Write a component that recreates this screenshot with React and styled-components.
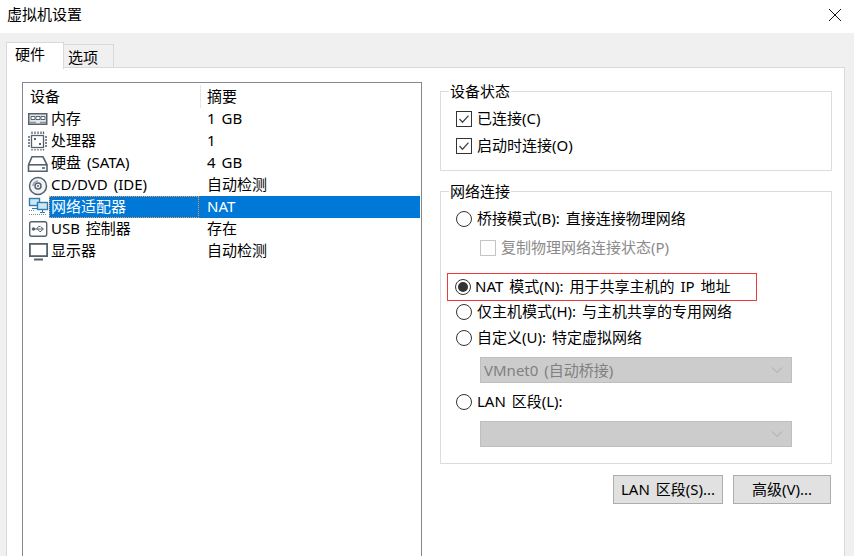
import React from 'react';
import styled, { createGlobalStyle } from 'styled-components';

const GlobalStyle = createGlobalStyle`
  html, body {
    margin: 0;
    padding: 0;
    background: #fff;
  }
  * {
    box-sizing: border-box;
  }
`;

const FONT = `"Noto Sans", "Noto Sans CJK SC", "Liberation Sans", sans-serif`;

const Page = styled.div`
  width: 854px;
  height: 556px;
  overflow: hidden;
  display: flex;
  flex-direction: column;
  background: #f0f0f0;
  color: #000;
  font-family: ${FONT};
  font-size: 15px;
  line-height: 20px;
  word-spacing: 2px;
`;

const TitleBar = styled.div`
  height: 33px;
  flex: none;
  padding: 4px 12px 0 7px;
  display: flex;
  justify-content: space-between;
  background: #fff;
`;

const CloseIcon = styled.svg`
  width: 14px;
  height: 14px;
  margin-top: 4px;
`;

const Body = styled.div`
  flex: 1;
  min-height: 0;
  padding: 9px 9px 0 6px;
  display: flex;
  flex-direction: column;
`;

const Tabs = styled.div`
  height: 26px;
  flex: none;
  display: flex;
  align-items: flex-start;
  position: relative;
  z-index: 1;
`;

const Tab = styled.div`
  height: ${(p) => (p.$active ? '27px' : '24px')};
  margin-top: ${(p) => (p.$active ? '0' : '2px')};
  width: ${(p) => (p.$active ? '58px' : '50px')};
  padding: ${(p) => (p.$active ? '1px 0 0 8px' : '2px 0 0 4px')};
  background: ${(p) => (p.$active ? '#fff' : '#f0f0f0')};
  border: 1px solid #d9d9d9;
  border-left-width: ${(p) => (p.$active ? '1px' : '0')};
  border-bottom-width: ${(p) => (p.$active ? '0' : '1px')};
`;

const Panel = styled.div`
  flex: 1;
  min-height: 0;
  margin-top: -1px;
  padding: 14px 0 0 15px;
  display: flex;
  align-items: flex-start;
  gap: 18px;
  background: #fff;
  border: 1px solid #d9d9d9;
  border-width: 1px 1px 0 1px;
`;

const Tree = styled.div`
  width: 400px;
  height: 480px;
  flex: none;
  padding: 1px;
  border: 1px solid #828790;
`;

const TreeHead = styled.div`
  height: 24px;
  display: grid;
  grid-template-columns: 170px 1fr;
  align-items: center;
  padding-left: 6px;
`;

const HeadCell = styled.div`
  height: 23px;
  line-height: 22px;
  padding-left: ${(p) => (p.$divided ? '6px' : '0')};
  border-left: ${(p) => (p.$divided ? '1px solid #e5e5e5' : '0')};
`;

const TreeRow = styled.div`
  height: 22px;
  line-height: 20px;
  display: grid;
  grid-template-columns: 24px 148px 1fr;
  align-items: center;
  padding-left: 3px;
`;

const RowIcon = styled.svg`
  width: 22px;
  height: 22px;
  display: block;
  overflow: visible;
`;

const RowName = styled.div`
  height: 22px;
  margin-left: -2px;
  padding-left: 2px;
  white-space: nowrap;
  color: ${(p) => (p.$selected ? '#fff' : '#000')};
  background: ${(p) => (p.$selected ? '#0078d7' : 'transparent')};
  outline: ${(p) => (p.$selected ? '1px dotted #f0a050' : '0')};
  outline-offset: -1px;
`;

const RowValue = styled.div`
  height: 22px;
  padding-left: 8px;
  color: ${(p) => (p.$selected ? '#fff' : '#000')};
  background: ${(p) => (p.$selected ? '#0078d7' : 'transparent')};
`;

const Side = styled.div`
  width: 392px;
  flex: none;
  padding-top: 9px;
  display: flex;
  flex-direction: column;
`;

const Group = styled.div`
  position: relative;
  height: ${(p) => p.$height}px;
  margin-bottom: ${(p) => p.$gap}px;
  padding: ${(p) => p.$pad};
  border: 1px solid #dcdcdc;
`;

const Legend = styled.div`
  position: absolute;
  top: -11px;
  left: 8px;
  padding: 0 1px;
  background: #fff;
`;

const Option = styled.label`
  height: ${(p) => p.$height || 26}px;
  margin-bottom: ${(p) => p.$after || 0}px;
  padding-left: ${(p) => p.$indent || 0}px;
  display: flex;
  align-items: center;
  gap: 5px;
  white-space: pre;
  color: ${(p) => (p.$disabled ? '#8a8a8a' : '#000')};
`;

const OptionText = styled.span`
  margin-bottom: 2px;
`;

const Marked = styled.div`
  height: 28px;
  margin: 0 74px -2px 6px;
  padding-left: 7px;
  display: flex;
  align-items: center;
  gap: 4px;
  white-space: pre;
  border: 1px solid #f03a3a;
`;

const Box = styled.span`
  width: 16px;
  height: 16px;
  flex: none;
  display: flex;
  background: #fff;
  border: 1px solid ${(p) => (p.$disabled ? '#c4c4c4' : '#333')};
`;

const Radio = styled.span`
  width: 16px;
  height: 16px;
  flex: none;
  display: flex;
  align-items: center;
  justify-content: center;
  border-radius: 50%;
  background: #fff;
  border: 1px solid #333;
`;

const RadioDot = styled.span`
  width: 10px;
  height: 10px;
  border-radius: 50%;
  background: #333;
`;

const Select = styled.div`
  height: 26px;
  margin-top: ${(p) => p.$top || 0}px;
  margin-left: 39px;
  width: 312px;
  padding: 0 8px 0 3px;
  display: flex;
  align-items: center;
  justify-content: space-between;
  color: #808080;
  background: #cccccc;
  border: 1px solid #bfbfbf;
`;

const Buttons = styled.div`
  display: flex;
  justify-content: flex-end;
  gap: 10px;
  padding-right: 1px;
`;

const Button = styled.div`
  width: ${(p) => p.$width}px;
  height: 29px;
  padding-bottom: 1px;
  display: flex;
  align-items: center;
  justify-content: center;
  background: #e1e1e1;
  border: 1px solid #adadad;
`;

const ICON = '#55626e';
const NET = '#2f7fae';

const icons = {
  memory: (
    <g fill="none" stroke={ICON}>
      <rect x="1.75" y="5.75" width="18" height="10.5" fill="#e4e7ea" strokeWidth="1.5" />
      <path d="M4 8.5h4v3H4zM9 8.5h4v3H9zM14 8.5h4v3h-4z" fill="#fff" />
      <path d="M2 14.5h7M13 14.5h6" stroke="#8b96a0" strokeWidth="1.6" />
    </g>
  ),
  cpu: (
    <g fill="none" stroke={ICON}>
      <rect x="4.5" y="5.5" width="12" height="12" fill="#fff" strokeWidth="1.3" />
      <path d="M5 1.5v2.5M8 1.5v2.5M11 1.5v2.5M14 1.5v2.5M16.5 1.5v2.5M5 19v1.5M8 19v1.5M11 19v1.5M14 19v1.5M16.5 19v1.5M1 7h2M1 10h2M1 13h2M1 16h2M18 7h2M18 10h2M18 13h2M18 16h2" strokeWidth="1.3" />
      <path d="M7 8h2v2H7zM12 13h2v2h-2z" fill={ICON} stroke="none" />
    </g>
  ),
  disk: (
    <g fill="none" stroke={ICON} strokeWidth="1.6">
      <path d="M5 4.8h11l4 8v6.4H1.5v-6.4z" fill="#fff" />
      <path d="M1.5 12.8h18.500" />
      <path d="M15 16h3" />
    </g>
  ),
  cd: (
    <g fill="none" stroke={ICON} strokeWidth="1.5">
      <circle cx="11" cy="12" r="8.5" fill="#f2f3f5" />
      <circle cx="11" cy="12" r="3" />
      <circle cx="11" cy="12" r="1" fill={ICON} stroke="none" />
      <path d="M6 12a5 5 0 0 1 5-5" stroke="#98a2ab" />
    </g>
  ),
  net: (
    <g fill="none">
      <rect x="2.5" y="2.5" width="10" height="7" fill="#cfe6f5" stroke={NET} strokeWidth="1.4" />
      <path d="M5 12.500h5" stroke={NET} />
      <rect x="10.5" y="6.500" width="10" height="7" fill="#cfe6f5" stroke={NET} strokeWidth="1.4" />
      <path d="M13 16.500h5M15.500 14v2" stroke={NET} />
      <path d="M2 14.500h6M2 18.500h17" stroke="#7d8994" strokeDasharray="1 1" />
    </g>
  ),
  usb: (
    <g fill="none" stroke={ICON}>
      <rect x="2.700" y="3.700" width="17" height="14.500" rx="2" fill="#fff" strokeWidth="1.400" />
      <path d="M6.500 11h9.500M14 9l2.500 2-2.500 2M9.500 11l2-2.500h2M10.500 11l2 2.500h1.500" />
      <circle cx="6.500" cy="11" r="1.300" fill={ICON} />
    </g>
  ),
  display: (
    <g fill="none" stroke={ICON} strokeWidth="1.800">
      <rect x="2.900" y="3.900" width="17.200" height="12.200" fill="#fff" />
      <path d="M7 19.500h9" strokeWidth="2" />
    </g>
  ),
};

const rows = [
  { icon: 'memory', name: '内存', value: '1 GB' },
  { icon: 'cpu', name: '处理器', value: '1' },
  { icon: 'disk', name: '硬盘 (SATA)', value: '4 GB' },
  { icon: 'cd', name: 'CD/DVD (IDE)', value: '自动检测' },
  { icon: 'net', name: '网络适配器', value: 'NAT', selected: true },
  { icon: 'usb', name: 'USB 控制器', value: '存在' },
  { icon: 'display', name: '显示器', value: '自动检测' },
];

const Check = ({ disabled, checked }) => (
  <Box $disabled={disabled}>
    {checked && (
      <svg width="14" height="14" viewBox="0 0 14 14">
        <path d="M2.500 7l3 3.200 6-6.600" fill="none" stroke="#444" strokeWidth="1.300" />
      </svg>
    )}
  </Box>
);

const Caret = () => (
  <svg width="12" height="8" viewBox="0 0 12 8">
    <path d="M1 1.500l5 5 5-5" fill="none" stroke="#a8a8a8" />
  </svg>
);

const App = () => (
  <Page>
    <GlobalStyle />
    <TitleBar>
      <span>虚拟机设置</span>
      <CloseIcon viewBox="0 0 14 14">
        <path d="M1 1l12 12M13 1L1 13" stroke="#111" fill="none" />
      </CloseIcon>
    </TitleBar>
    <Body>
      <Tabs>
        <Tab $active>硬件</Tab>
        <Tab>选项</Tab>
      </Tabs>
      <Panel>
        <Tree>
          <TreeHead>
            <HeadCell>设备</HeadCell>
            <HeadCell $divided>摘要</HeadCell>
          </TreeHead>
          {rows.map((row) => (
            <TreeRow key={row.icon}>
              <RowIcon viewBox="0 0 22 22">{icons[row.icon]}</RowIcon>
              <RowName $selected={row.selected}>{row.name}</RowName>
              <RowValue $selected={row.selected}>{row.value}</RowValue>
            </TreeRow>
          ))}
        </Tree>
        <Side>
          <Group $height={80} $gap={20} $pad="13px 0 0 15px">
            <Legend>设备状态</Legend>
            <Option $height={27}><Check checked /><OptionText>已连接(C)</OptionText></Option>
            <Option $height={27}><Check checked /><OptionText>启动时连接(O)</OptionText></Option>
          </Group>
          <Group $height={273} $gap={11} $pad="14px 0 0 0">
            <Legend>网络连接</Legend>
            <Option $indent={15}><Radio /><OptionText>桥接模式(B): 直接连接物理网络</OptionText></Option>
            <Option $indent={39} $height={32} $after={9} $disabled><Check disabled /><OptionText>复制物理网络连接状态(P)</OptionText></Option>
            <Marked><Radio><RadioDot /></Radio><OptionText>NAT 模式(N): 用于共享主机的 IP 地址</OptionText></Marked>
            <Option $indent={15}><Radio /><OptionText>仅主机模式(H): 与主机共享的专用网络</OptionText></Option>
            <Option $indent={15}><Radio /><OptionText>自定义(U): 特定虚拟网络</OptionText></Option>
            <Select $top={6}>VMnet0 (自动桥接)<Caret /></Select>
            <Option $indent={15} $height={38}><Radio /><OptionText>LAN 区段(L):</OptionText></Option>
            <Select><span /><Caret /></Select>
          </Group>
          <Buttons>
            <Button $width={110}>LAN 区段(S)...</Button>
            <Button $width={98}>高级(V)...</Button>
          </Buttons>
        </Side>
      </Panel>
    </Body>
  </Page>
);

export default App;
